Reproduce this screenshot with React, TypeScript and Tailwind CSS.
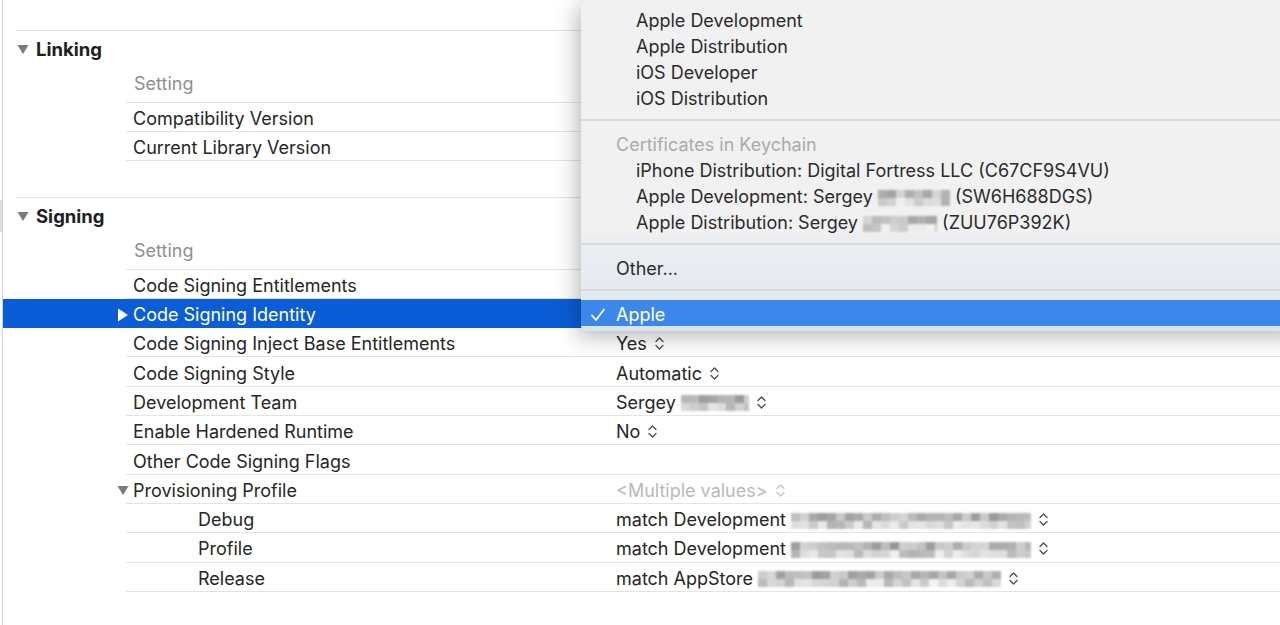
import React from "react";

type Row = {
    name: string;
    value?: React.ReactNode;
    arrow?: "down" | "right";
    indent?: boolean;
    selected?: boolean;
};

// small up/down chevrons used by Xcode popup values
const Stepper = ({ light }: { light?: boolean }) => (
    <svg width="11" height="17" viewBox="0 0 11 17" className="ml-[7px] shrink-0">
        <path
            d="M2 6.5 L5.5 3 L9 6.5 M2 10.5 L5.5 14 L9 10.5"
            fill="none"
            stroke={light ? "#c4c4c4" : "#4a4a4a"}
            strokeWidth="1.3"
            strokeLinecap="round"
            strokeLinejoin="round"
        />
    </svg>
);

const Tri = ({ dir, white }: { dir: "down" | "right"; white?: boolean }) =>
    dir === "down" ? (
        <svg width="12" height="11" viewBox="0 0 12 11" className="shrink-0">
            <path d="M0.5 1 L11.5 1 L6 10 Z" fill={white ? "#fff" : "#7b7b7b"} />
        </svg>
    ) : (
        <svg width="12" height="14" viewBox="0 0 12 14" className="shrink-0">
            <path d="M1 0.5 L11 7 L1 13.5 Z" fill={white ? "#fff" : "#7b7b7b"} />
        </svg>
    );

// pixelated blur, like the redacted names in the screenshot
const Smudge = ({ w, seed }: { w: number; seed: number }) => {
    const cols = Math.ceil(w / 9);
    let s = seed;
    const rnd = () => {
        s = (s * 9301 + 49297) % 233280;
        return s / 233280;
    };
    const rows = [0, 1].map((r) =>
        Array.from({ length: cols }, () => {
            const v = Math.round((r === 0 ? 150 : 178) + rnd() * 65);
            return `rgb(${v},${v},${v})`;
        })
    );
    return (
        <span className="inline-flex flex-col blur-[0.8px] overflow-hidden mt-[2px]" style={{ width: w }}>
            {rows.map((row, i) => (
                <span key={i} className="flex h-[8px]">
                    {row.map((c, j) => (
                        <span key={j} className="w-[9px] h-[8px] shrink-0" style={{ background: c }} />
                    ))}
                </span>
            ))}
        </span>
    );
};

const linking: Row[] = [
    { name: "Compatibility Version" },
    { name: "Current Library Version" },
];

const signing: Row[] = [
    { name: "Code Signing Entitlements" },
    { name: "Code Signing Identity", arrow: "right", selected: true },
    { name: "Code Signing Inject Base Entitlements", value: <>Yes<Stepper /></> },
    { name: "Code Signing Style", value: <>Automatic<Stepper /></> },
    { name: "Development Team", value: <>Sergey&nbsp;<Smudge w={68} seed={7} /><Stepper /></> },
    { name: "Enable Hardened Runtime", value: <>No<Stepper /></> },
    { name: "Other Code Signing Flags" },
    {
        name: "Provisioning Profile",
        arrow: "down",
        value: <span className="flex items-center text-[#b9b9b9]">&lt;Multiple values&gt;<Stepper light /></span>,
    },
    { name: "Debug", indent: true, value: <>match Development&nbsp;<Smudge w={240} seed={11} /><Stepper /></> },
    { name: "Profile", indent: true, value: <>match Development&nbsp;<Smudge w={240} seed={23} /><Stepper /></> },
    { name: "Release", indent: true, value: <>match AppStore&nbsp;<Smudge w={243} seed={41} /><Stepper /></> },
];

const SettingRow = ({ row }: { row: Row }) => (
    <div className={`h-[29.3px] ${row.selected ? "bg-[#0b5dd7] text-white" : "text-[#262626]"}`}>
        <div className={`ml-[123px] h-full flex items-center pt-[3px] border-b ${row.selected ? "border-transparent" : "border-[#e4e4e4]"}`}>
            <div className={`w-[483px] shrink-0 flex items-center ${row.indent ? "pl-[72px]" : "pl-[7px]"}`}>
                {row.arrow && (
                    <span className="-ml-[16px] mr-[4px] w-[12px] flex">
                        <Tri dir={row.arrow} white={row.selected} />
                    </span>
                )}
                {row.name}
            </div>
            <div className="pl-[7px] flex items-center">{row.value}</div>
        </div>
    </div>
);

const Section = ({ title, rows }: { title: string; rows: Row[] }) => (
    <div>
        <div className="ml-[13px] border-t border-[#e2e2e2] h-[36px] flex items-center pt-[2px] pl-[1px] gap-[7px]">
            <Tri dir="down" />
            <span className="font-bold text-[18.5px] text-[#1e1e1e]">{title}</span>
        </div>
        <div className="ml-[123px] h-[36.5px] flex items-center pl-[8px] text-[#8f8f8f] border-b border-[#e4e4e4]">
            Setting
        </div>
        {rows.map((r) => (
            <SettingRow key={r.name} row={r} />
        ))}
    </div>
);

const MenuItem = ({ children, sub }: { children: React.ReactNode; sub?: boolean }) => (
    <div className={`h-[26px] flex items-center pt-[3px] ${sub ? "pl-[55px]" : "pl-[35px]"}`}>{children}</div>
);

const Sep = () => (
    <div className="h-[20px] flex items-center">
        <div className="h-[2px] w-full bg-[#d9dadc]" />
    </div>
);

const Menu = () => (
    <div className="absolute left-[581px] top-0 w-[720px] bg-[#f1f1f1] rounded-bl-[6px] shadow-[-4px_6px_22px_rgba(0,0,0,0.28)] text-[#2b2b2b] text-[18px] overflow-hidden">
        <div className="pt-[6px]">
            <MenuItem sub>Apple Development</MenuItem>
            <MenuItem sub>Apple Distribution</MenuItem>
            <MenuItem sub>iOS Developer</MenuItem>
            <MenuItem sub>iOS Distribution</MenuItem>
            <Sep />
            <MenuItem><span className="text-[#ababab]">Certificates in Keychain</span></MenuItem>
            <MenuItem sub>iPhone Distribution: Digital Fortress LLC (C67CF9S4VU)</MenuItem>
            <MenuItem sub>
                Apple Development: Sergey&nbsp;<Smudge w={72} seed={3} />&nbsp;(SW6H688DGS)
            </MenuItem>
            <MenuItem sub>
                Apple Distribution: Sergey&nbsp;<Smudge w={74} seed={19} />&nbsp;(ZUU76P392K)
            </MenuItem>
        </div>
        <div className="bg-[linear-gradient(to_bottom,#eceef1,#e4e9f1)]">
            <Sep />
            <MenuItem>Other...</MenuItem>
            <Sep />
        </div>
        <div className="bg-[#d8e4f3] pb-[5px]">
            <div className="h-[26px] bg-[#3c87ec] text-white flex items-center pt-[3px] pl-[9px]">
                <svg width="16" height="14" viewBox="0 0 16 14" className="mr-[10px]">
                    <path d="M2 7.5 L6 12 L14 1.5" fill="none" stroke="#fff" strokeWidth="1.8" strokeLinecap="round" strokeLinejoin="round" />
                </svg>
                Apple
            </div>
        </div>
    </div>
);

export default function App() {
    return (
        <div className="w-[1280px] h-[625px] overflow-hidden bg-white relative flex font-['Inter','Noto_Sans',sans-serif] text-[18px]">
            <div className="w-[2px] shrink-0 pt-[200px]">
                <div className="h-[32px] bg-[#dcdcdc]" />
            </div>
            <div className="flex-1 border-l border-[#d2d2d2]">
                <div className="h-[30px]" />
                <Section title="Linking" rows={linking} />
                <div className="h-[36px]" />
                <Section title="Signing" rows={signing} />
            </div>
            <Menu />
        </div>
    );
}
